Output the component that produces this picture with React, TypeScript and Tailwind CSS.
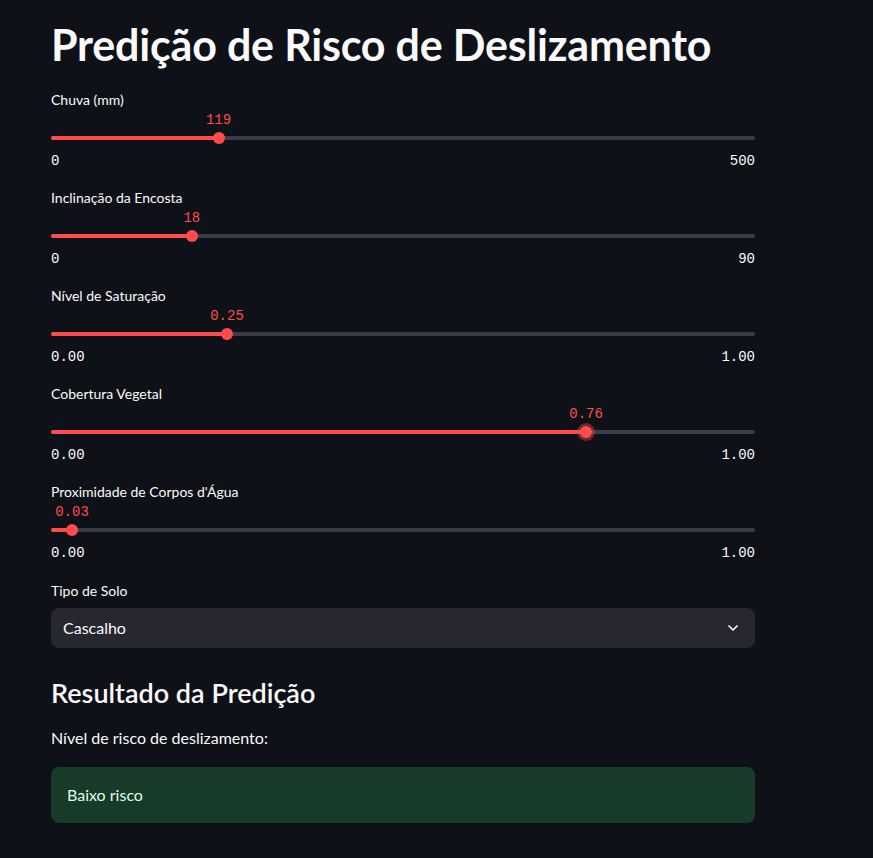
import { ChevronDown } from 'lucide-react';

interface SliderProps {
  label: string;
  value: number;
  min: number;
  max: number;
  decimals: number;
  focused?: boolean;
}

function Slider({ label, value, min, max, decimals, focused }: SliderProps) {
  const pct = ((value - min) / (max - min)) * 100;
  const fmt = (n: number) => n.toFixed(decimals);

  return (
    <div className="mb-[17px]">
      <div className="h-5 text-sm leading-5 text-[#fafafa]">{label}</div>
      <div className="relative h-[38px]">
        <div
          className="absolute top-[1px] h-[18px] -translate-x-1/2 font-['Liberation_Mono',monospace] text-sm leading-[18px] text-[#ff4b4b]"
          style={{ left: `${pct}%` }}
        >
          {fmt(value)}
        </div>
        <div className="absolute top-[26px] left-0 right-0 h-1 rounded-full bg-[#3a3c46]" />
        <div
          className="absolute top-[26px] left-0 h-1 rounded-full bg-[#ff4b4b]"
          style={{ width: `${pct}%` }}
        />
        <div
          className={
            'absolute top-[22px] h-3 w-3 -translate-x-1/2 rounded-full bg-[#ff4b4b] ' +
            (focused ? 'ring-[3px] ring-[#ff4b4b]/40' : '')
          }
          style={{ left: `${pct}%` }}
        />
      </div>
      <div className="mt-[3px] flex h-5 justify-between font-['Liberation_Mono',monospace] text-sm leading-5 text-[#fafafa]">
        <span>{fmt(min)}</span>
        <span>{fmt(max)}</span>
      </div>
    </div>
  );
}

export default function App() {
  return (
    <div className="min-h-[858px] bg-[#0e1117] font-['Lato',sans-serif] text-[#fafafa]">
      <div className="ml-[51px] w-[704px] pt-[18px]">
        <h1 className="mb-[19px] h-[53px] text-[43px] font-bold leading-[53px] tracking-[-0.2px]">
          Predição de Risco de Deslizamento
        </h1>

        <Slider label="Chuva (mm)" value={119} min={0} max={500} decimals={0} />
        <Slider label="Inclinação da Encosta" value={18} min={0} max={90} decimals={0} />
        <Slider label="Nível de Saturação" value={0.25} min={0} max={1} decimals={2} />
        <Slider label="Cobertura Vegetal" value={0.76} min={0} max={1} decimals={2} focused />
        <Slider label="Proximidade de Corpos d'Água" value={0.03} min={0} max={1} decimals={2} />

        <div className="mt-[18px] h-5 text-sm leading-5">Tipo de Solo</div>
        <div className="mt-[7px] flex h-10 items-center justify-between rounded-lg bg-[#262730] pl-3 pr-[14px]">
          <span className="text-base">Cascalho</span>
          <ChevronDown size={16} strokeWidth={2.5} className="text-[#fafafa]" />
        </div>

        <h2 className="mt-[28px] h-[34px] text-[27px] font-semibold leading-[34px]">
          Resultado da Predição
        </h2>
        <p className="mt-[16px] h-6 text-base leading-6">Nível de risco de deslizamento:</p>
        <div className="mt-[17px] flex h-14 items-center rounded-lg bg-[#183a29] px-4">
          <span className="text-base text-[#dffde9]">Baixo risco</span>
        </div>
      </div>
    </div>
  );
}
